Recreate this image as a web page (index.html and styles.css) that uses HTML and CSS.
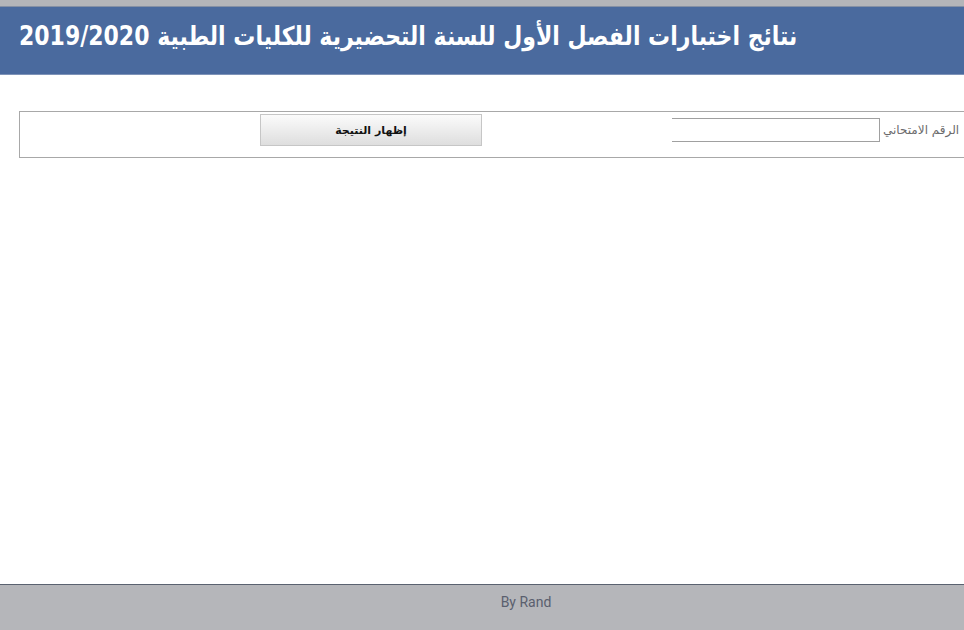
FILE: index.html
```html
<!DOCTYPE html>
<html lang="ar">
<head>
<meta charset="utf-8">
<title>نتائج اختبارات</title>
<link rel="stylesheet" href="styles.css">
</head>
<body>
<div class="page">
  <div class="topstrip"></div>
  <header class="header">
    <h1 class="title">نتائج اختبارات الفصل الأول للسنة التحضيرية للكليات الطبية 2019/2020</h1>
  </header>
  <main class="main">
    <form class="searchbox" onsubmit="return false">
      <div class="btncell">
        <button class="showbtn" type="button">إظهار النتيجة</button>
      </div>
      <div class="fieldcell">
        <input class="examno" type="text">
        <label class="label">الرقم الامتحاني</label>
      </div>
    </form>
  </main>
  <footer class="footer">By Rand</footer>
</div>
</body>
</html>
```

FILE: styles.css
```css
html, body {
  margin: 0;
  padding: 0;
  height: 100%;
  overflow: hidden;
  background: #fff;
}
.page {
  display: flex;
  flex-direction: column;
  height: 630px;
  width: 964px;
  overflow: hidden;
}
.topstrip {
  height: 6px;
  background: #b4b5b9;
  border-bottom: 1px solid #8590a4;
  flex: none;
}
.header {
  flex: none;
  height: 67px;
  background: #4a6a9e;
  border-bottom: 1px solid #7e93b8;
  display: flex;
  align-items: center;
  padding-left: 19px;
}
.title {
  margin: 0;
  color: #fff;
  font-family: "DejaVu Sans", Roboto, sans-serif;
  font-weight: bold;
  font-size: 26px;
  direction: rtl;
  white-space: nowrap;
  position: relative;
  top: -5px;
  transform: scaleX(0.846);
  transform-origin: left center;
}
.main {
  flex: 1;
  padding: 36px 0 0 19px;
}
.searchbox {
  display: flex;
  align-items: center;
  width: 1000px;
  height: 47px;
  border: 1px solid #a8a8a8;
  border-right: none;
  box-sizing: border-box;
  margin: 0;
}
.btncell {
  width: 652px;
  display: flex;
  justify-content: flex-start;
  padding-left: 240px;
  box-sizing: border-box;
}
.showbtn {
  width: 222px;
  height: 32px;
  margin-top: -9px;
  border: 1px solid #c6c6c6;
  background: linear-gradient(#fbfbfb, #dedede);
  font-family: "DejaVu Sans", sans-serif;
  font-size: 11px;
  font-weight: bold;
  color: #111;
  direction: rtl;
  padding: 0;
}
.fieldcell {
  display: flex;
  align-items: center;
  gap: 3px;
  margin-top: -9px;
}
.examno {
  width: 208px;
  height: 24px;
  box-sizing: border-box;
  border: 1px solid #a0a0a0;
  border-left: none;
  margin: 0;
  padding: 0;
}
.label {
  font-family: "DejaVu Sans", sans-serif;
  font-size: 12px;
  color: #6b6b6b;
  direction: rtl;
  white-space: nowrap;
}
.footer {
  flex: none;
  height: 46px;
  background: #b5b6ba;
  border-top: 1px solid #5a6270;
  color: #5a5f6e;
  font-family: Roboto, sans-serif;
  font-size: 14px;
  display: flex;
  justify-content: center;
  align-items: flex-start;
  padding-top: 9px;
  padding-left: 88px;
  box-sizing: border-box;
}
```
